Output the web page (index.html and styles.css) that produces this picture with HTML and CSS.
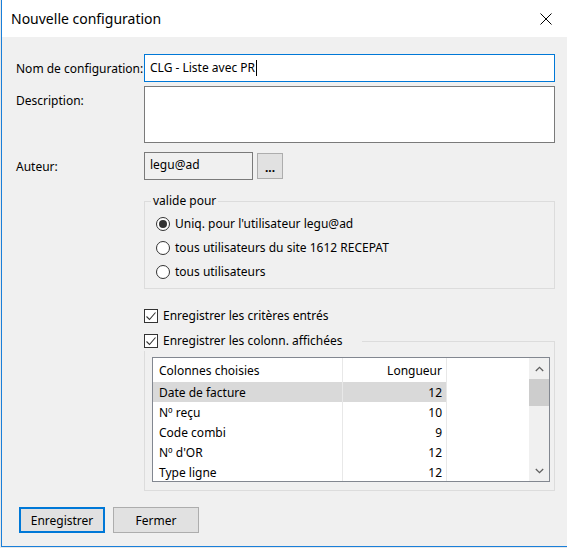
FILE: index.html
```html
<!DOCTYPE html>
<html lang="fr">
<head>
<meta charset="utf-8">
<title>Nouvelle configuration</title>
<link rel="stylesheet" href="styles.css">
</head>
<body>
<div class="window">
  <header class="titlebar">
    <span class="title">Nouvelle configuration</span>
    <svg class="close" width="12" height="12" viewBox="0 0 12 12"><path d="M0.5 0.5 L11.5 11.5 M11.5 0.5 L0.5 11.5" stroke="#000" stroke-width="1" fill="none"/></svg>
  </header>
  <main class="content">
    <div class="row">
      <span class="lbl">Nom de configuration:</span>
      <div class="input focused">CLG - Liste avec PR<span class="caret"></span></div>
    </div>
    <div class="row row-desc">
      <span class="lbl lbl-top">Description:</span>
      <div class="textarea"></div>
    </div>
    <div class="row row-author">
      <span class="lbl">Auteur:</span>
      <div class="input readonly">legu@ad</div>
      <button class="btn-dots">...</button>
    </div>

    <fieldset class="group valid">
      <legend class="legend-text">valide pour</legend>
      <div class="radio-row"><span class="radio checked"></span>Uniq. pour l'utilisateur legu@ad</div>
      <div class="radio-row"><span class="radio"></span>tous utilisateurs du site 1612 RECEPAT</div>
      <div class="radio-row"><span class="radio"></span>tous utilisateurs</div>
    </fieldset>

    <div class="check-row standalone">
      <span class="checkbox"><svg width="12" height="12" viewBox="0 0 12 12"><path d="M1.5 6.5 L4.5 9.5 L10.5 2.5" stroke="#333" stroke-width="1.1" fill="none"/></svg></span>
      Enregistrer les critères entrés
    </div>

    <fieldset class="group cols">
      <legend class="check-row legend-check">
        <span class="checkbox"><svg width="12" height="12" viewBox="0 0 12 12"><path d="M1.5 6.5 L4.5 9.5 L10.5 2.5" stroke="#333" stroke-width="1.1" fill="none"/></svg></span>
        Enregistrer les colonn. affichées
      </legend>
      <div class="listview">
        <div class="lv-grid">
          <div class="cell head">Colonnes choisies</div><div class="cell head num">Longueur</div>
          <div class="cell sel">Date de facture</div><div class="cell num sel">12</div>
          <div class="cell">Nº reçu</div><div class="cell num">10</div>
          <div class="cell">Code combi</div><div class="cell num">9</div>
          <div class="cell">Nº d'OR</div><div class="cell num">12</div>
          <div class="cell">Type ligne</div><div class="cell num">12</div>
        </div>
        <div class="scrollbar">
          <div class="sb-btn"><svg width="9" height="6" viewBox="0 0 9 6"><path d="M0.8 5 L4.5 1.3 L8.2 5" stroke="#606060" stroke-width="1.3" fill="none"/></svg></div>
          <div class="sb-thumb"></div>
          <div class="sb-track"></div>
          <div class="sb-btn"><svg width="9" height="6" viewBox="0 0 9 6"><path d="M0.8 1 L4.5 4.7 L8.2 1" stroke="#606060" stroke-width="1.3" fill="none"/></svg></div>
        </div>
      </div>
    </fieldset>

    <div class="buttons">
      <button class="btn default">Enregistrer</button>
      <button class="btn">Fermer</button>
    </div>
  </main>
</div>
</body>
</html>
```
FILE: styles.css
```css
html {
  background: #e8e8e8;
}
body {
  margin: 0;
  font-family: "Noto Sans", sans-serif;
  font-size: 12px;
  line-height: 16px;
  color: #000;
}
.window {
  margin-left: 1px;
  width: 565px;
  height: 546px;
  border-left: 1px solid #1a7fd9;
  border-bottom: 1px solid #1a7fd9;
  background: #f0f0f0;
  display: flex;
  flex-direction: column;
  overflow: hidden;
}
.titlebar {
  flex: none;
  height: 37px;
  background: #fff;
  display: flex;
  align-items: center;
  justify-content: space-between;
  padding: 0 15px 0 9px;
  box-sizing: border-box;
}
.title {
  font-size: 14px;
  line-height: 18px;
}
.close {
  display: block;
}
.content {
  padding: 17px 12px 0 14px;
}
.row {
  display: flex;
  align-items: center;
}
.lbl {
  flex: none;
  width: 128px;
  padding-top: 1px;
}
.lbl-top {
  padding-top: 7px;
}
.row-desc {
  margin-top: 4px;
  align-items: flex-start;
}
.row-author {
  margin-top: 9px;
}
.input {
  flex: 1;
  height: 28px;
  box-sizing: border-box;
  border: 1px solid #7a7a7a;
  background: #fff;
  padding: 0 5px;
  display: flex;
  align-items: center;
}
.input.focused {
  border-color: #0078d7;
}
.caret {
  display: inline-block;
  width: 1px;
  height: 16px;
  background: #000;
  margin-left: 1px;
}
.textarea {
  flex: 1;
  height: 57px;
  box-sizing: border-box;
  border: 1px solid #7a7a7a;
  background: #fff;
}
.input.readonly {
  flex: none;
  width: 109px;
  background: #f0f0f0;
  align-items: flex-start;
  padding-top: 4px;
}
.btn-dots {
  flex: none;
  width: 26px;
  height: 26px;
  margin-left: 4px;
  padding: 4px 0 0;
  border: 1px solid #adadad;
  background: #e1e1e1;
  font-family: "Noto Sans", sans-serif;
  font-size: 12px;
  font-weight: bold;
  line-height: 16px;
  color: #000;
}
.group {
  margin: 13px 0 0 128px;
  border: 1px solid #dcdcdc;
  min-width: 0;
}
.valid {
  padding: 3px 0 4px 6px;
}
.legend-text {
  padding: 0 2px;
  line-height: 16px;
}
.radio-row {
  height: 24px;
  display: flex;
  align-items: center;
  padding-left: 5px;
}
.radio {
  flex: none;
  width: 14px;
  height: 14px;
  box-sizing: border-box;
  border: 1px solid #333;
  border-radius: 50%;
  background: #fff;
  margin-right: 5px;
  display: flex;
  align-items: center;
  justify-content: center;
}
.radio.checked::after {
  content: "";
  width: 8px;
  height: 8px;
  border-radius: 50%;
  background: #333;
}
.check-row {
  height: 20px;
  display: flex;
  align-items: center;
}
.standalone {
  margin: 17px 0 0 128px;
}
.checkbox {
  flex: none;
  width: 14px;
  height: 14px;
  box-sizing: border-box;
  border: 1px solid #333;
  background: #fff;
  margin-right: 5px;
  display: flex;
  align-items: center;
  justify-content: center;
}
.checkbox svg {
  display: block;
}
.cols {
  margin-top: 5px;
  padding: 6px 4px 8px 7px;
}
.legend-check {
  margin-left: -8px;
  padding: 0 19px 0 0;
}
.listview {
  height: 125px;
  box-sizing: border-box;
  border: 1px solid #828790;
  background: #fff;
  display: flex;
  overflow: hidden;
}
.lv-grid {
  flex: 1;
  display: grid;
  grid-template-columns: 190px 104px;
  grid-template-rows: 24px;
  grid-auto-rows: 20px;
  align-content: start;
  overflow: hidden;
}
.cell {
  border-right: 1px solid #e8e8e8;
  padding: 1px 0 0 6px;
  display: flex;
  align-items: center;
  white-space: nowrap;
}
.cell.num {
  justify-content: flex-end;
  padding: 1px 4px 0 0;
}
.cell.sel {
  background: #d9d9d9;
}
.scrollbar {
  flex: none;
  width: 20px;
  background: #f0f0f0;
  display: flex;
  flex-direction: column;
}
.sb-btn {
  height: 21px;
  display: flex;
  align-items: center;
  justify-content: center;
}
.sb-btn svg {
  display: block;
}
.sb-thumb {
  height: 27px;
  background: #cdcdcd;
}
.sb-track {
  flex: 1;
}
.buttons {
  margin-top: 16px;
  padding-left: 3px;
  display: flex;
  gap: 8px;
}
.btn {
  width: 86px;
  height: 26px;
  box-sizing: border-box;
  border: 1px solid #adadad;
  background: #e1e1e1;
  font-family: "Noto Sans", sans-serif;
  font-size: 12px;
  color: #000;
  padding: 0;
}
.btn.default {
  border: 2px solid #0078d7;
}
```
